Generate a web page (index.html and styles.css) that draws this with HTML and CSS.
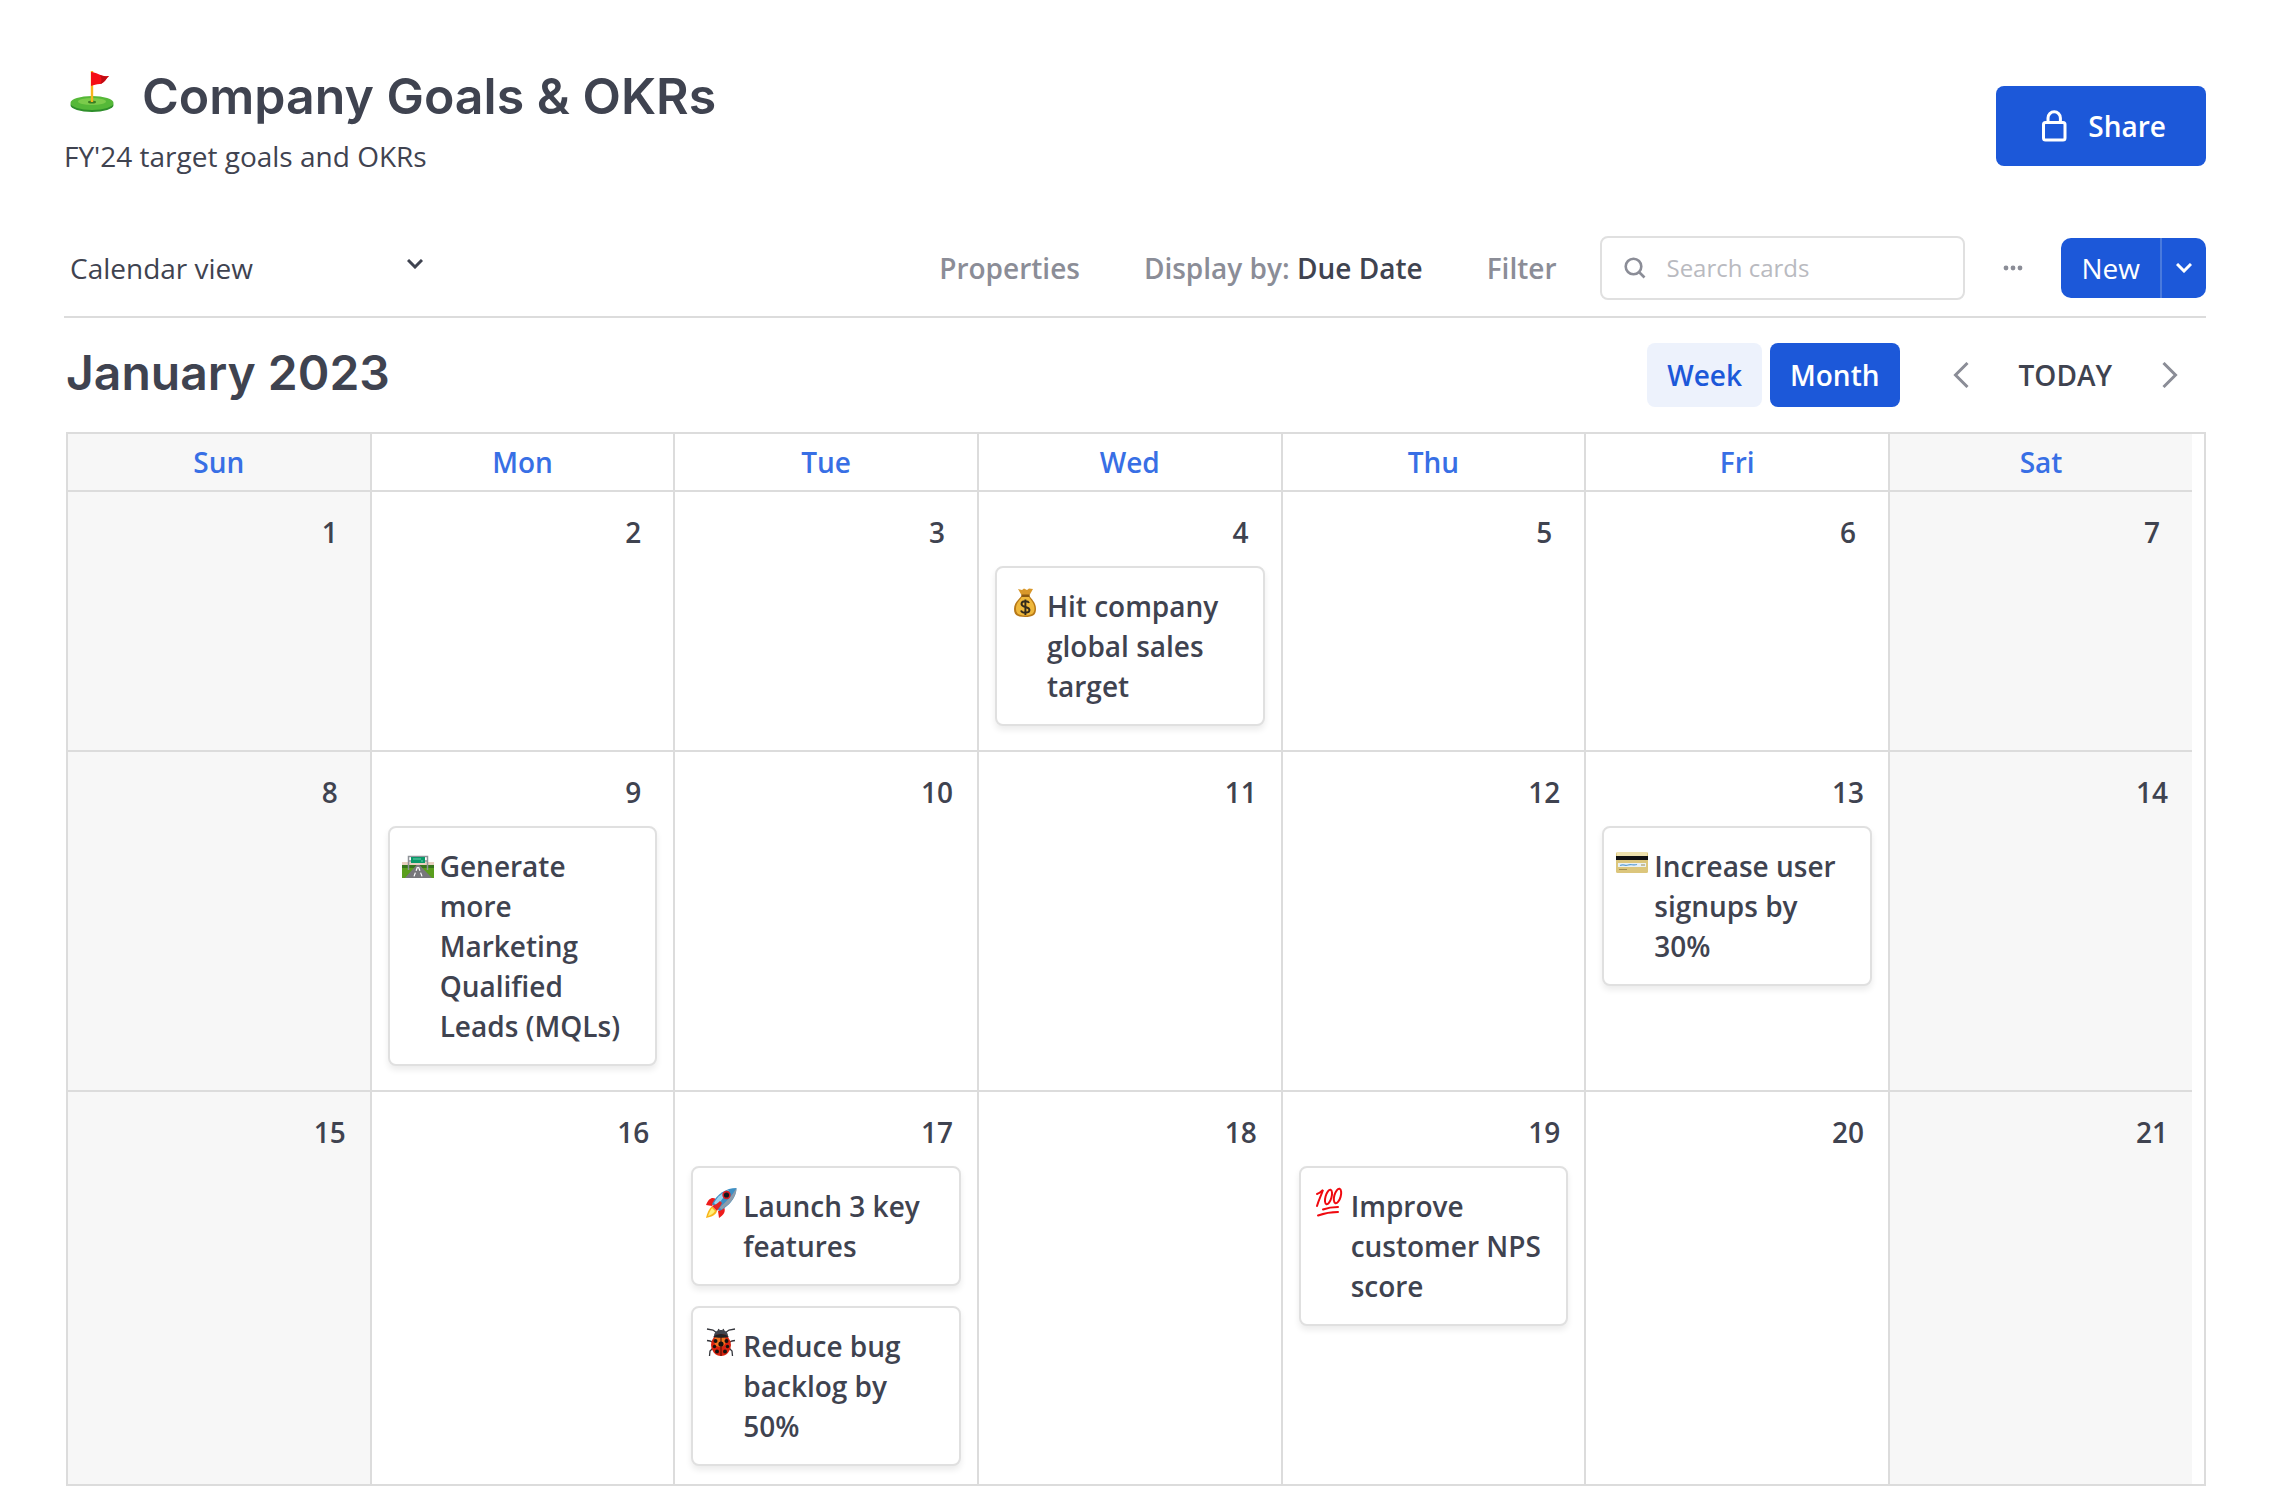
FILE: index.html
```html
<!DOCTYPE html>
<html lang="en">
<head>
<meta charset="utf-8">
<title>Company Goals &amp; OKRs</title>
<link rel="stylesheet" href="styles.css">
</head>
<body>
<main class="board">
  <header class="board-header">
    <div>
      <h1 class="board-title">
        <svg class="board-icon" viewBox="0 0 48 48" aria-hidden="true">
          <ellipse cx="24" cy="38" rx="21.500" ry="7" fill="#2f8f2b"/>
          <ellipse cx="24" cy="36" rx="21.500" ry="7" fill="#55b838"/>
          <ellipse cx="24" cy="34.500" rx="14" ry="3.500" fill="#7bcb4b"/>
          <ellipse cx="24" cy="35" rx="4" ry="1.500" fill="#3a7a22"/>
          <path d="M22.800 4h2.400v31h-2.400z" fill="#f7b51c"/>
          <path d="M23 5c6 0 9 5 18 4-3 2-4 7-9 8-4 0-6 1-9 2z" fill="#f50f14"/>
          <path d="M32 8c3 1 5 2 9 1-3 2-4 7-9 8 2-3 2-5 0-9z" fill="#c00c14"/>
        </svg>
        Company Goals &amp; OKRs
      </h1>
      <p class="board-subtitle">FY'24 target goals and OKRs</p>
    </div>
    <button class="share-button" type="button">
      <svg class="icon" viewBox="0 0 32 32" fill="none" stroke="currentColor" stroke-width="3" aria-hidden="true">
        <rect x="5.500" y="12.500" width="21.500" height="17.500" rx="2"/>
        <path d="M10 12V8a6.200 6.200 0 0 1 12.400 0v4"/>
      </svg>
      Share
    </button>
  </header>

  <div class="toolbar">
    <div class="view-picker">
      <select class="view-select" aria-label="View">
        <option>Calendar view</option>
      </select>
      <svg class="chevron" viewBox="0 0 16 10" aria-hidden="true"><path d="M1 1l7 7 7-7"/></svg>
    </div>
    <button class="toolbar-button" type="button">Properties</button>
    <button class="toolbar-button" type="button">Display by: <span class="strong">Due Date</span></button>
    <button class="toolbar-button" type="button">Filter</button>
    <label class="search">
      <svg class="search-icon" viewBox="0 0 22 22" fill="none" stroke="currentColor" stroke-width="2.600" aria-hidden="true"><circle cx="9.500" cy="9.500" r="7.800"/><path d="M15 15l5.500 5.500"/></svg>
      <input class="search-input" type="search" placeholder="Search cards" aria-label="Search cards">
    </label>
    <button class="more-button" type="button" aria-label="More options">
      <svg class="dots" viewBox="0 0 20 6" fill="currentColor" aria-hidden="true"><circle cx="3" cy="3" r="2.400"/><circle cx="10" cy="3" r="2.400"/><circle cx="17" cy="3" r="2.400"/></svg>
    </button>
    <div class="new-group">
      <button class="new-button" type="button">New</button>
      <button class="new-menu" type="button" aria-label="New card templates">
        <svg class="chevron" viewBox="0 0 16 10" aria-hidden="true"><path d="M1 1l7 7 7-7"/></svg>
      </button>
    </div>
  </div>

  <div class="period">
    <h2 class="period-title">January 2023</h2>
    <div class="range">
      <button class="range-button" type="button">Week</button>
      <button class="range-button selected" type="button" aria-pressed="true">Month</button>
    </div>
    <div class="pager">
      <button class="pager-arrow" type="button" aria-label="Previous month"><svg class="angle" viewBox="0 0 16 26" aria-hidden="true"><path d="M14.500 1L2.500 13l12 12"/></svg></button>
      <button class="today-button" type="button">TODAY</button>
      <button class="pager-arrow" type="button" aria-label="Next month"><svg class="angle" viewBox="0 0 16 26" aria-hidden="true"><path d="M1.500 1l12 12-12 12"/></svg></button>
    </div>
  </div>

  <div class="calendar-frame">
    <table class="calendar">
      <thead>
        <tr><th class="weekend">Sun</th><th>Mon</th><th>Tue</th><th>Wed</th><th>Thu</th><th>Fri</th><th class="weekend">Sat</th></tr>
      </thead>
      <tbody>
        <tr>
          <td class="weekend"><div class="day">1</div></td>
          <td><div class="day">2</div></td>
          <td><div class="day">3</div></td>
          <td><div class="day">4</div>
            <div class="cards">
              <a class="card" href="#sales">
                <svg class="card-icon" viewBox="0 0 32 32" aria-hidden="true">
                  <path d="M9 3l4 1 2-1.500 3 1.500 2-1.500L24 3l-4 7h-7z" fill="#d9982b"/>
                  <path d="M13 9h7c2 4 7 7 7 14 0 6-3 8-11 8S5 29 5 23c0-7 6-10 8-14z" fill="#b87918"/>
                  <path d="M13.500 9.500h6c1 4 6 7 6 13 0 5-3 7-9.500 7s-9-2-9-7c0-6 5-9 6.500-13z" fill="#efb83c"/>
                  <path d="M12.500 8.500h8v2.500h-8z" fill="#8c5a12"/>
                  <path d="M20 17c-1-2.500-7.500-2.500-7.500 1 0 4 8 2 8 6 0 3.500-7.500 3.500-8.500.5M16.400 13.500v15.500" fill="none" stroke="#332a1b" stroke-width="1.900"/>
                </svg>
                <span>Hit company global sales target</span>
              </a>
            </div>
          </td>
          <td><div class="day">5</div></td>
          <td><div class="day">6</div></td>
          <td class="weekend"><div class="day">7</div></td>
        </tr>
        <tr>
          <td class="weekend"><div class="day">8</div></td>
          <td><div class="day">9</div>
            <div class="cards">
              <a class="card" href="#leads">
                <svg class="card-icon" viewBox="0 0 32 32" aria-hidden="true">
                  <path d="M0 16h32v3H0z" fill="#e9cfc0"/>
                  <path d="M0 19h32v14H0z" fill="#5a9e1d"/>
                  <path d="M0 19h32v3H0z" fill="#37751d"/>
                  <path d="M14.500 19h3L31 33H2z" fill="#77777b"/>
                  <path d="M15.500 21L11 33M16.500 21L21 33" fill="none" stroke="#fff" stroke-width="1.200" stroke-dasharray="4 2"/>
                  <path d="M6.500 24V10.500h19V24M6.500 15h3M22.500 15h3" fill="none" stroke="#8e9298" stroke-width="1.500"/>
                  <path d="M9 11h14v6H9z" fill="#0a9a6a"/>
                  <path d="M11 13h8M19 15h2" stroke="#67d0aa"/>
                </svg>
                <span>Generate more Marketing Qualified Leads (MQLs)</span>
              </a>
            </div>
          </td>
          <td><div class="day">10</div></td>
          <td><div class="day">11</div></td>
          <td><div class="day">12</div></td>
          <td><div class="day">13</div>
            <div class="cards">
              <a class="card" href="#signups">
                <svg class="card-icon" viewBox="0 0 32 32" aria-hidden="true">
                  <rect y="6" width="32" height="21" rx="1.500" fill="#dcc67c"/>
                  <path d="M1 6h30v4H1z" fill="#eee1ad"/>
                  <path d="M0 10h32v4H0z" fill="#111"/>
                  <path d="M2 17h28v4H2z" fill="#e9f1f4"/>
                  <path d="M4 19.500c4-2 5 1 8-.5s5 1 9-.5" fill="none" stroke="#5c9fd4" stroke-width="1.200"/>
                  <path d="M25 19h4M3 23.500h8" stroke="#a08d50" stroke-width="1"/>
                </svg>
                <span>Increase user signups by 30%</span>
              </a>
            </div>
          </td>
          <td class="weekend"><div class="day">14</div></td>
        </tr>
        <tr>
          <td class="weekend"><div class="day">15</div></td>
          <td><div class="day">16</div></td>
          <td><div class="day">17</div>
            <div class="cards">
              <a class="card" href="#features">
                <svg class="card-icon" viewBox="0 0 32 32" aria-hidden="true">
                  <path d="M11 13c-4-2-7-1-10 6l6 1zM19 21c2 4 0 8-5 11l-1-7z" fill="#ee1c1c"/>
                  <path d="M7 20l5 5c-1 4-6 6-11 7 1-5 3-9 6-12z" fill="#f9b51b"/>
                  <path d="M7 22l3 3c-2 3-4 4-7 5 1-3 2-5 4-8z" fill="#fff07a"/>
                  <path d="M31.500 2c0 9-7 18-17 23L7 18C12 8 21 2 31.500 2z" fill="#3d8fc4"/>
                  <path d="M31.500 2c0 8-6 16-15 21.500l-2-2C21 16 27 10 31.500 2z" fill="#8c9cab"/>
                  <path d="M9 17c4-7 9-11 15-13l-12 16z" fill="#9bd4f0"/>
                  <path d="M7 20c3-1 6-3 8-5l2 2c-2 4-4 6-5 8z" fill="#e32525"/>
                  <circle cx="21.500" cy="9" r="4.200" fill="#d91d23"/><circle cx="21.500" cy="9" r="2.600" fill="#111820"/>
                </svg>
                <span>Launch 3 key features</span>
              </a>
              <a class="card" href="#bugs">
                <svg class="card-icon" viewBox="0 0 32 32" aria-hidden="true">
                  <path d="M12 7L8 4 2 3M20 7l4-3 6-1M9 17l-4-2-3-.5M23 17l4-2 3-.500M8 22l-3 3-.5 5M24 22l3 3 .5 5M13 5l1-2M19 5l-1-2" fill="none" stroke="#34363c" stroke-width="1.300"/>
                  <path d="M9 10c0-8 14-8 14 0z" fill="#40444c"/>
                  <ellipse cx="16" cy="19" rx="10" ry="11" fill="#d8230f"/>
                  <ellipse cx="15" cy="15" rx="6" ry="6" fill="#f2711c"/>
                  <path d="M8 11c4-4 12-4 16 0-4 1-12 1-16 0z" fill="#202226"/>
                  <path d="M16 11v19" stroke="#421008"/>
                  <g fill="#16120f"><circle cx="10.500" cy="15" r="2"/><circle cx="21.500" cy="15" r="2"/><circle cx="16" cy="18" r="2.600"/><circle cx="9.500" cy="20.500" r="1.700"/><circle cx="22.500" cy="20.500" r="1.700"/><circle cx="12" cy="25.500" r="2"/><circle cx="20" cy="25.500" r="2"/></g>
                </svg>
                <span>Reduce bug backlog by 50%</span>
              </a>
            </div>
          </td>
          <td><div class="day">18</div></td>
          <td><div class="day">19</div>
            <div class="cards">
              <a class="card" href="#nps">
                <svg class="card-icon" viewBox="0 0 32 32" fill="none" stroke="#f0090f" stroke-width="2" stroke-linecap="round" aria-hidden="true">
                  <path d="M4 8c3-1 4-2 6-4-2 6-4 9-6 16"/>
                  <ellipse cx="15.500" cy="11" rx="3" ry="7.500" transform="rotate(16 15.500 11)"/>
                  <ellipse cx="24.500" cy="10" rx="3.200" ry="7.500" transform="rotate(16 24.500 10)"/>
                  <path d="M10 23.500c4-1.500 9-2.500 15-2.500M5 29.500c7-2.500 12-3.500 20-3.500"/>
                </svg>
                <span>Improve customer NPS score</span>
              </a>
            </div>
          </td>
          <td><div class="day">20</div></td>
          <td class="weekend"><div class="day">21</div></td>
        </tr>
      </tbody>
    </table>
  </div>
</main>
</body>
</html>
```
FILE: styles.css
```css
:root {
  --text: #3f4350;
  --muted: #8b8d97;
  --blue: #1c58d9;
  --line: #dcdcdc;
}

* { box-sizing: border-box; }

body {
  margin: 0;
  background: #fff;
  color: var(--text);
  font: 400 28px/40px "Open Sans", "Noto Sans", sans-serif;
}

button, input, select {
  margin: 0;
  padding: 0;
  border: 0;
  background: none;
  color: inherit;
  font: inherit;
}

h1, h2, p { margin: 0; }

.board { padding: 56px 64px 20px; }

.board-header {
  display: flex;
  align-items: flex-end;
  justify-content: space-between;
}

.board-title {
  display: flex;
  align-items: center;
  gap: 26px;
  padding-left: 4px;
  font: 600 50px/80px Inter, sans-serif;
}

.board-icon { width: 48px; height: 48px; margin-bottom: 10px; }

.share-button {
  display: flex;
  align-items: center;
  gap: 18px;
  height: 80px;
  margin-bottom: 10px;
  padding: 0 40px 0 42px;
  border-radius: 8px;
  background: var(--blue);
  color: #fff;
  font-weight: 600;
}

.icon { width: 32px; height: 32px; }

.toolbar {
  display: flex;
  align-items: center;
  gap: 24px;
  margin-top: 60px;
  padding-bottom: 16px;
  border-bottom: 2px solid var(--line);
}

.view-picker {
  display: grid;
  grid-template-columns: 359px;
  align-items: center;
  margin-right: auto;
}

.view-select, .view-picker .chevron { grid-area: 1 / 1; }

.view-select { height: 64px; padding-left: 6px; appearance: none; }

.view-picker .chevron {
  justify-self: end;
  margin-bottom: 8px;
  pointer-events: none;
}

.chevron {
  width: 16px;
  height: 10px;
  fill: none;
  stroke: currentColor;
  stroke-width: 3px;
}

.toolbar-button {
  padding: 0 20px;
  color: var(--muted);
  font-weight: 600;
  white-space: nowrap;
}

.strong { color: var(--text); }

.search {
  display: flex;
  align-items: center;
  gap: 20px;
  width: 365px;
  height: 64px;
  padding: 0 20px 0 22px;
  border: 2px solid #e0e0e0;
  border-radius: 8px;
  color: var(--muted);
}

.search-icon { flex: none; width: 22px; height: 22px; }
.search-input { width: 100%; font-size: 24px; outline: 0; }
.search-input::placeholder { color: #b9bac0; }

.more-button { width: 48px; height: 48px; color: var(--muted); }
.dots { display: block; width: 20px; height: 6px; margin: 0 auto; }

.new-group {
  display: flex;
  overflow: hidden;
  border-radius: 10px;
  background: var(--blue);
  color: #fff;
}

.new-button { height: 60px; padding: 0 20px; }

.new-menu {
  display: grid;
  place-items: center;
  width: 46px;
  border-left: 2px solid #497add;
}

.period {
  display: flex;
  align-items: flex-start;
  padding: 25px 8px 25px 2px;
}

.period-title { font: 600 48px/60px Inter, sans-serif; }

.range { display: flex; gap: 8px; margin: 0 33px 0 auto; }

.range-button {
  height: 64px;
  padding: 0 20px;
  border-radius: 8px;
  background: #edf2fc;
  color: var(--blue);
  font-weight: 600;
}

.range-button.selected { background: var(--blue); color: #fff; }

.pager { display: flex; align-items: center; height: 64px; }
.pager-arrow { width: 56px; height: 56px; color: var(--muted); }

.angle {
  display: block;
  width: 16px;
  height: 26px;
  margin: 0 auto;
  fill: none;
  stroke: currentColor;
  stroke-width: 3px;
}

.today-button { padding: 0 30px; font-weight: 600; }

.calendar-frame {
  margin-left: 2px;
  padding-right: 12px;
  border: 2px solid var(--line);
}

.calendar {
  width: 100%;
  table-layout: fixed;
  border-spacing: 0;
}

.calendar th, .calendar td {
  border: solid var(--line);
  border-width: 0 2px 2px 0;
}

.calendar th:last-child, .calendar td:last-child { border-right: 0; }
.calendar th:last-child { width: 302px; }
.calendar tr:last-child td { border-bottom: 0; padding-bottom: 18px; }

.calendar th {
  padding: 8px 0;
  color: #386fe5;
  font-weight: 600;
}

.calendar td { padding: 20px 16px 24px; vertical-align: top; }
.calendar .weekend { background: #f7f7f7; }

.day {
  width: 32px;
  margin: 0 8px 0 auto;
  text-align: center;
  font-weight: 600;
}

.cards { display: grid; gap: 20px; margin-top: 14px; }

.card {
  display: flex;
  gap: 6px;
  padding: 18px 20px 18px 12px;
  border: 2px solid #e0e0e0;
  border-radius: 8px;
  background: #fff;
  box-shadow: 0 4px 6px rgba(0, 0, 0, .08);
  color: inherit;
  font-weight: 600;
  text-decoration: none;
}

.card-icon { flex: none; width: 32px; height: 32px; }
```
